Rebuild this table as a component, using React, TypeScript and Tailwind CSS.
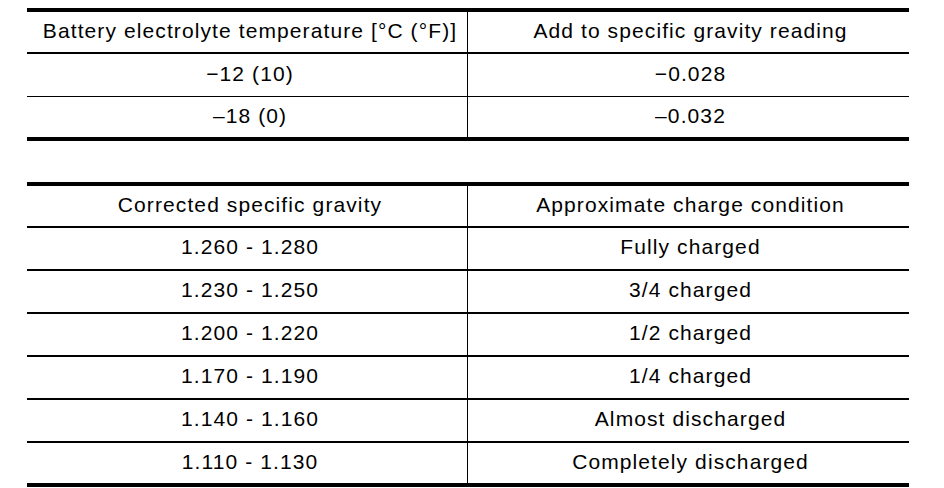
import React from 'react'

type Row = [string, string]

const tempRows: Row[] = [
  ['\u221212 (10)', '\u22120.028'],
  ['\u201318 (0)', '\u20130.032'],
]

const chargeRows: Row[] = [
  ['1.260 - 1.280', 'Fully charged'],
  ['1.230 - 1.250', '3/4 charged'],
  ['1.200 - 1.220', '1/2 charged'],
  ['1.170 - 1.190', '1/4 charged'],
  ['1.140 - 1.160', 'Almost discharged'],
  ['1.110 - 1.130', 'Completely discharged'],
]

function Cells({ left, right, className }: { left: string; right: string; className: string }) {
  return (
    <div className={`flex border-black ${className}`}>
      <div className="w-[441px] flex items-center justify-center border-r border-black pb-[3px] pl-[6px]">
        {left}
      </div>
      <div className="flex-1 flex items-center justify-center pb-[3px] pl-[4px]">{right}</div>
    </div>
  )
}

export default function App() {
  return (
    <div
      className="w-[944px] h-[488px] bg-white text-black text-[21px] tracking-[1.1px] pl-[27px] pt-[8px]"
      style={{ fontFamily: '"Liberation Sans", Arial, sans-serif' }}
    >
      {/* Temperature correction */}
      <div className="w-[882px] border-t-4 border-black">
        <Cells
          left="Battery electrolyte temperature [°C (°F)]"
          right="Add to specific gravity reading"
          className="h-[42px] border-b-2"
        />
        <Cells left={tempRows[0][0]} right={tempRows[0][1]} className="h-[43px] border-b" />
        <Cells left={tempRows[1][0]} right={tempRows[1][1]} className="h-[44px] border-b-4" />
      </div>

      {/* Charge condition */}
      <div className="w-[882px] border-t-4 border-black mt-[41px]">
        <Cells
          left="Corrected specific gravity"
          right="Approximate charge condition"
          className="h-[42px] border-b-2"
        />
        {chargeRows.map((r, i) => (
          <Cells
            key={r[0]}
            left={r[0]}
            right={r[1]}
            className={i === chargeRows.length - 1 ? 'h-[44px] border-b-4' : 'h-[43px] border-b-2'}
          />
        ))}
      </div>
    </div>
  )
}
